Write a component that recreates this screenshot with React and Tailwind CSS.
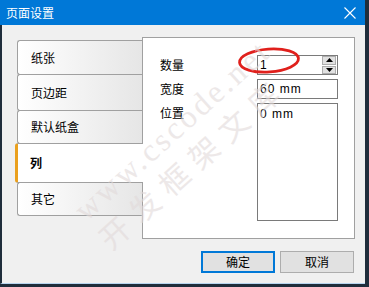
import React from "react";

const font = { fontFamily: '"Noto Sans CJK SC", "Liberation Sans", sans-serif' };

function Tab({ label, h, first }) {
  return (
    <div
      className={`ml-[2px] w-[125px] ${h} ${first ? "" : "-mt-px"} border-l border-t border-b border-[#a0a0a0] rounded-l-[3px] bg-gradient-to-r from-white to-[#e6e6e6] flex items-center pl-[13px] text-[12px] text-black`}
    >
      {label}
    </div>
  );
}

export default function App() {
  return (
    <div className="relative w-[369px] h-[287px] bg-[#1f2d3b] overflow-hidden" style={font}>
      <div className="w-[365px] h-[284px] flex flex-col">
        <div className="h-[25px] bg-[#0078d7] flex items-center justify-between pl-[6px] pr-[9px]">
          <span className="text-white text-[12px] leading-none">页面设置</span>
          <svg width="12" height="12" viewBox="0 0 12 12">
            <path d="M0.5 0.5 L11.5 11.5 M11.5 0.5 L0.5 11.5" stroke="white" strokeWidth="1.1" />
          </svg>
        </div>
        <div className="flex-1 bg-[#f0f0f0] border-l-2 border-b border-l-[#1f2d3b] border-b-[#b8d4ee] flex flex-col">
          <div className="mt-[12px] ml-[13px] flex">
            <div className="w-[127px] pt-[3px] flex flex-col relative z-10">
              <Tab label="纸张" h="h-[35px]" first />
              <Tab label="页边距" h="h-[37px]" />
              <Tab label="默认纸盒" h="h-[34px]" />
              <div className="-mt-px h-[40px] w-[128px] bg-white border-t border-b border-[#a0a0a0] border-l-[3px] border-l-[#eaa01e] rounded-l-[3px] flex items-center pl-[12px] text-[12px] font-bold text-black">
                列
              </div>
              <Tab label="其它" h="h-[34px]" />
            </div>
            <div className="relative w-[213px] h-[202px] bg-white border border-[#a0a0a0] pt-[17px] pl-[17px]">
              <div className="grid grid-cols-[97px_81px] gap-y-[4px] text-[12px] text-black">
                <div className="h-[20px] flex items-center">数量</div>
                <div className="h-[20px] border border-[#7a7a7a] bg-white flex items-center justify-between pl-[2px] pr-[1px]" style={{ fontFamily: '"Liberation Sans", sans-serif' }}>
                  <span>1</span>
                  <div className="flex flex-col w-[14px] h-[18px] gap-px">
                    <div className="flex-1 bg-[#e1e1e1] border border-[#adadad] flex items-center justify-center">
                      <svg width="7" height="4" viewBox="0 0 7 4"><path d="M3.5 0 L7 4 L0 4 Z" fill="black" /></svg>
                    </div>
                    <div className="flex-1 bg-[#e1e1e1] border border-[#adadad] flex items-center justify-center">
                      <svg width="7" height="4" viewBox="0 0 7 4"><path d="M0 0 L7 0 L3.5 4 Z" fill="black" /></svg>
                    </div>
                  </div>
                </div>
                <div className="h-[20px] flex items-center">宽度</div>
                <div className="h-[20px] border border-[#7a7a7a] bg-white flex items-center pl-[2px] tracking-[1px]" style={{ fontFamily: '"Liberation Sans", sans-serif' }}>
                  60 mm
                </div>
                <div className="pt-[1px]">位置</div>
                <div className="h-[118px] border border-[#7a7a7a] bg-white pl-[2px] pt-[1px] tracking-[1px]" style={{ fontFamily: '"Liberation Sans", sans-serif' }}>
                  0 mm
                </div>
              </div>
              <svg className="absolute left-[94px] top-[8px]" width="64" height="29" viewBox="0 0 64 29">
                <ellipse cx="32" cy="14.5" rx="29.5" ry="11.5" fill="none" stroke="#e0201c" strokeWidth="2.8" transform="rotate(-4 32 14.5)" />
              </svg>
            </div>
          </div>
          <div className="mt-[12px] flex justify-end gap-[5px] pr-[11px]">
            <button className="w-[74px] h-[22px] bg-[#e1e1e1] border-2 border-[#0078d7] text-[12px] text-black flex items-center justify-center">确定</button>
            <button className="w-[74px] h-[22px] bg-[#e1e1e1] border border-[#adadad] text-[12px] text-black flex items-center justify-center">取消</button>
          </div>
        </div>
      </div>
      <div className="pointer-events-none z-20 absolute left-[172px] top-[130px] -translate-x-1/2 -translate-y-1/2 -rotate-[42deg] whitespace-nowrap text-[32px] text-[#e2dada] opacity-60 tracking-[3px]" style={{ fontFamily: '"Liberation Serif", serif' }}>
        www.cscode.net
      </div>
      <div className="pointer-events-none z-20 absolute left-[192px] top-[162px] -translate-x-1/2 -translate-y-1/2 -rotate-[42deg] whitespace-nowrap text-[30px] text-[#e2dada] opacity-60 tracking-[10px]" style={{ fontFamily: '"Noto Sans CJK SC", serif' }}>
        开发框架文库
      </div>
    </div>
  );
}
